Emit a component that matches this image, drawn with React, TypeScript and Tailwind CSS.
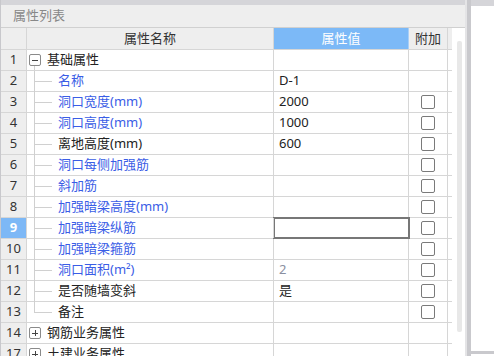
import React from 'react';

type Row = {
    n: number;
    name: string;
    value?: string;
    kind: 'group' | 'child';
    color?: 'blue' | 'black';
    check?: boolean;
    open?: boolean;
    last?: boolean;
    valueGray?: boolean;
};

const rows: Row[] = [
    { n: 1, name: '基础属性', kind: 'group', open: true },
    { n: 2, name: '名称', value: 'D-1', kind: 'child', color: 'blue' },
    { n: 3, name: '洞口宽度(mm)', value: '2000', kind: 'child', color: 'blue', check: true },
    { n: 4, name: '洞口高度(mm)', value: '1000', kind: 'child', color: 'blue', check: true },
    { n: 5, name: '离地高度(mm)', value: '600', kind: 'child', color: 'black', check: true },
    { n: 6, name: '洞口每侧加强筋', kind: 'child', color: 'blue', check: true },
    { n: 7, name: '斜加筋', kind: 'child', color: 'blue', check: true },
    { n: 8, name: '加强暗梁高度(mm)', kind: 'child', color: 'blue', check: true },
    { n: 9, name: '加强暗梁纵筋', kind: 'child', color: 'blue', check: true },
    { n: 10, name: '加强暗梁箍筋', kind: 'child', color: 'blue', check: true },
    { n: 11, name: '洞口面积(m²)', value: '2', kind: 'child', color: 'blue', check: true, valueGray: true },
    { n: 12, name: '是否随墙变斜', value: '是', kind: 'child', color: 'black', check: true },
    { n: 13, name: '备注', kind: 'child', color: 'black', check: true, last: true },
    { n: 14, name: '钢筋业务属性', kind: 'group' },
    { n: 17, name: '土建业务属性', kind: 'group' },
];

const font = { fontFamily: '"Noto Sans", "Noto Sans CJK SC", sans-serif' };

const Box: React.FC<{ open?: boolean }> = ({ open }) => (
    <div className="w-[12px] h-[12px] border border-[#8a8a8a] rounded-[2px] bg-white flex items-center justify-center relative">
        <div className="w-[6px] h-px bg-[#444]" />
        {!open && <div className="absolute w-px h-[6px] bg-[#444]" />}
    </div>
);

const PropRow: React.FC<{ row: Row }> = ({ row }) => {
    const selected = row.n === 9;
    return (
        <div className="flex h-[21px] border-b border-[#d6d6d6] text-[13px]">
            <div
                className={`w-[26px] shrink-0 border-r border-[#d6d6d6] flex items-center justify-center ${
                    selected ? 'bg-[#7db8f6] text-white font-bold' : 'bg-[#eeeeee] text-[#333]'
                }`}
            >
                {row.n}
            </div>
            <div className="w-[247px] shrink-0 border-r border-[#d6d6d6] relative flex items-center">
                {row.kind === 'group' ? (
                    <>
                        <div className="ml-[2px]">
                            <Box open={row.open} />
                        </div>
                        <span className="ml-[6px] text-[#222]">{row.name}</span>
                        {row.open && <div className="absolute left-[7px] top-[16px] bottom-0 w-px bg-[#d0d0d0]" />}
                    </>
                ) : (
                    <>
                        <div
                            className={`absolute left-[7px] top-0 w-px bg-[#d0d0d0] ${row.last ? 'h-[11px]' : 'h-[21px]'}`}
                        />
                        <div className="absolute left-[8px] top-[10px] w-[17px] h-px bg-[#d0d0d0]" />
                        <span
                            className={`ml-[31px] ${row.color === 'blue' ? 'text-[#3a5de6]' : 'text-[#222]'}`}
                        >
                            {row.name}
                        </span>
                    </>
                )}
            </div>
            <div
                className={`w-[135px] shrink-0 border-r border-[#d6d6d6] flex items-center pl-[5px] ${
                    row.valueGray ? 'text-[#8a8fa0]' : 'text-[#222]'
                } ${selected ? 'outline-2 outline-[#777] -outline-offset-1' : ''}`}
            >
                {row.value}
            </div>
            <div className="w-[39px] shrink-0 border-r border-[#d6d6d6] flex items-center justify-center">
                {row.check && <div className="w-[14px] h-[14px] border border-[#7a7a7a] rounded-[2px] bg-white" />}
            </div>
        </div>
    );
};

export default function App() {
    return (
        <div className="w-[494px] h-[356px] overflow-hidden flex bg-white" style={font}>
            <div className="w-[465px] shrink-0 flex flex-col border-l border-[#c8c8cc]">
                <div className="h-[5px] bg-[#d5d5d9]" />
                <div className="h-[23px] bg-[#eeeeee] border-b border-[#d0d0d0] flex items-center pl-[12px] text-[13px] text-[#888]">
                    属性列表
                </div>
                <div className="flex flex-1 min-h-0">
                    <div className="w-[451px] shrink-0">
                        <div className="flex h-[22px] border-b border-[#d6d6d6] bg-[#eeeeee] text-[13px] text-[#333]">
                            <div className="w-[26px] shrink-0 border-r border-[#d6d6d6]" />
                            <div className="w-[247px] shrink-0 border-r border-[#d6d6d6] flex items-center justify-center">
                                属性名称
                            </div>
                            <div className="w-[135px] shrink-0 border-r border-[#a9cff7] bg-[#7cb9f7] text-white flex items-center justify-center">
                                属性值
                            </div>
                            <div className="w-[39px] shrink-0 border-r border-[#d6d6d6] flex items-center justify-center">
                                附加
                            </div>
                        </div>
                        {rows.map((r) => (
                            <PropRow key={r.n} row={r} />
                        ))}
                    </div>
                    <div className="w-[13px] shrink-0 bg-white pl-[5px] pt-[13px]">
                        <div className="w-[5px] h-[291px] bg-[#e8e8e8] rounded-[2px]" />
                    </div>
                </div>
            </div>
            <div className="w-[6px] shrink-0 flex">
                <div className="w-[2px] bg-[#e4e4e6]" />
                <div className="w-[4px] bg-[#c9c9cd]" />
            </div>
            <div className="flex-1 flex flex-col">
                <div className="h-[6px] bg-[#d5d5d9]" />
                <div className="h-[348px] bg-white border-b-[3px] border-[#c9c9cd]" />
            </div>
        </div>
    );
}
